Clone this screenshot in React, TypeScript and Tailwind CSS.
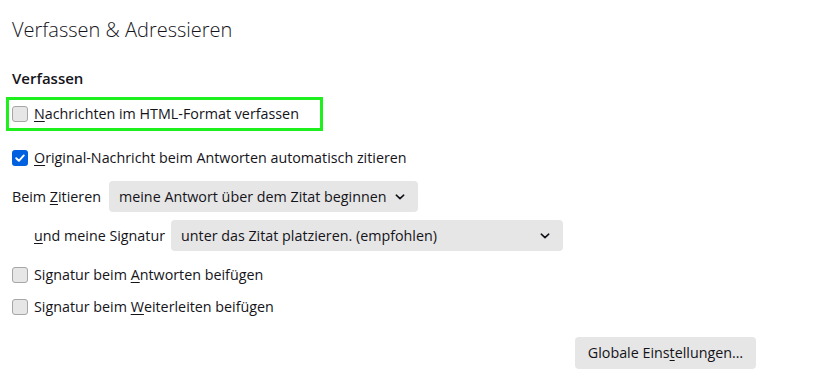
import React from 'react'

const font = { fontFamily: '"Open Sans", "Noto Sans", sans-serif' }

function Box({ checked }: { checked?: boolean }) {
    if (checked) {
        return (
            <span className="w-4 h-4 rounded-[3px] bg-[#0061e0] flex items-center justify-center shrink-0">
                <svg width="12" height="12" viewBox="0 0 12 12" fill="none">
                    <path d="M2.2 6.2 L4.9 8.8 L9.8 3.4" stroke="white" strokeWidth="1.9" strokeLinecap="round" strokeLinejoin="round" />
                </svg>
            </span>
        )
    }
    return <span className="w-4 h-4 rounded-[3px] bg-[#e6e6e6] border border-[#a6a6a6] shrink-0" />
}

function Chevron() {
    return (
        <svg width="10" height="6" viewBox="0 0 10 6" fill="none">
            <path d="M1.3 1.2 L5 4.7 L8.7 1.2" stroke="#15141a" strokeWidth="1.6" strokeLinecap="round" strokeLinejoin="round" />
        </svg>
    )
}

function Check({ label, checked, className = '' }: { label: [string, string, string], checked?: boolean, className?: string }) {
    return (
        <div className={`flex items-center gap-[6px] h-[22px] ${className}`}>
            <Box checked={checked} />
            <span>
                {label[0]}<span className="underline underline-offset-2">{label[1]}</span>{label[2]}
            </span>
        </div>
    )
}

export default function App() {
    return (
        <div className="w-[832px] h-[384px] bg-white text-[#15141a] text-[14.3px] px-3 overflow-hidden" style={font}>
            <h1 className="mt-[15px] h-[30px] leading-[30px] text-[20px] font-light">Verfassen &amp; Adressieren</h1>
            <h2 className="mt-[22px] h-[22px] leading-[22px] text-[15px] font-semibold">Verfassen</h2>

            <Check
                className="mt-[14px] w-[305px] outline-3 outline-solid outline-[#1ef01e] outline-offset-3"
                label={['', 'N', 'achrichten im HTML-Format verfassen']}
            />
            <Check className="mt-[22px]" checked label={['', 'O', 'riginal-Nachricht beim Antworten automatisch zitieren']} />

            <div className="mt-[12px] flex items-center h-[31px]">
                <span className="w-[97px]">Beim <span className="underline underline-offset-2">Z</span>itieren</span>
                <div className="w-[309px] h-[31px] rounded-[4px] bg-[#e6e6e6] flex items-center justify-between pl-[10px] pr-[13px]">
                    <span>meine Antwort über dem Zitat beginnen</span>
                    <Chevron />
                </div>
            </div>

            <div className="mt-[8px] flex items-center h-[31px] pl-[22px]">
                <span className="w-[137px]"><span className="underline underline-offset-2">u</span>nd meine Signatur</span>
                <div className="w-[392px] h-[31px] rounded-[4px] bg-[#e6e6e6] flex items-center justify-between pl-[10px] pr-[13px]">
                    <span>unter das Zitat platzieren. (empfohlen)</span>
                    <Chevron />
                </div>
            </div>

            <Check className="mt-[13px]" label={['Signatur beim ', 'A', 'ntworten beifügen']} />
            <Check className="mt-[10px]" label={['Signatur beim ', 'W', 'eiterleiten beifügen']} />

            <div className="mt-[19px] flex justify-end pr-[64px]">
                <button className="h-[32px] w-[181px] rounded-[4px] bg-[#e6e6e6]">
                    Globale Eins<span className="underline underline-offset-2">t</span>ellungen…
                </button>
            </div>
        </div>
    )
}
